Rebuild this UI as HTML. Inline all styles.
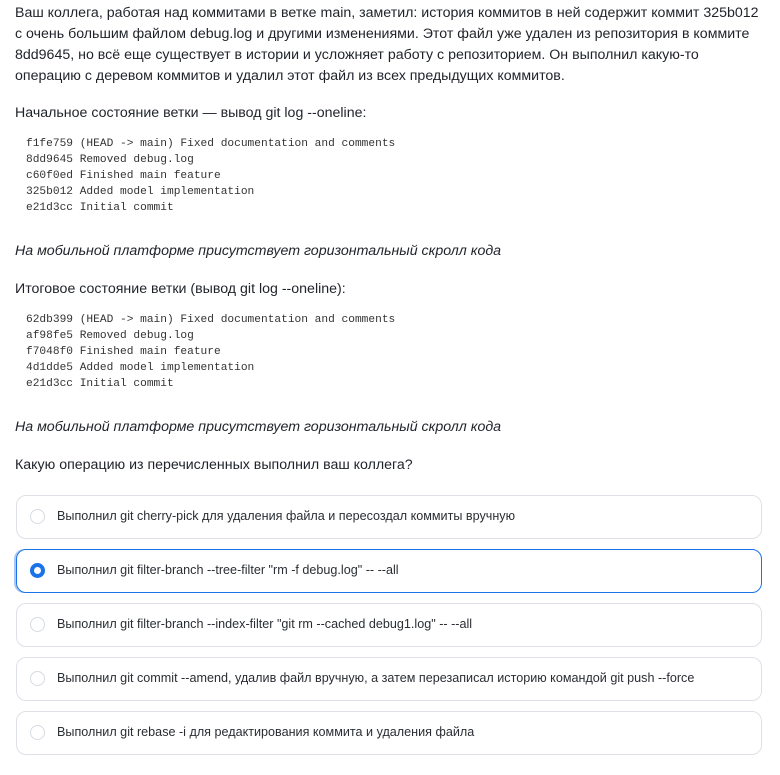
<html><head><style>
body{margin:0;background:#fff;font-family:"Liberation Sans",sans-serif;color:#1f2329;}
.w{position:absolute;left:15px;top:0;width:750px}
p{margin:0;font-size:14.2px;line-height:21px}
pre{margin:0;font-family:"Liberation Mono",monospace;font-size:11.2px;line-height:16px;color:#333;padding-left:11px}
.i{font-style:italic}
.c{position:absolute;left:16px;width:744px;height:42px;border:1px solid #dde1e7;border-radius:10px;box-sizing:content-box}
.c span{position:absolute;left:40px;top:13px;font-size:12.6px;color:#2a2e33}
.r{position:absolute;left:13px;top:13px;width:15px;height:15px;border:1px solid #d6dae0;border-radius:50%;box-sizing:border-box}
.s{border-color:#1a73e8;box-shadow:-2px 0 0 #a9c8f5}
.s .r{border:4px solid #1a73e8;background:#fff}
</style></head><body>
<div class="w">
<p style="position:absolute;top:3px">Ваш коллега, работая над коммитами в ветке main, заметил: история коммитов в ней содержит коммит 325b012 с очень большим файлом debug.log и другими изменениями. Этот файл уже удален из репозитория в коммите 8dd9645, но всё еще существует в истории и усложняет работу с репозиторием. Он выполнил какую-то операцию с деревом коммитов и удалил этот файл из всех предыдущих коммитов.</p>
<p style="position:absolute;top:103px">Начальное состояние ветки — вывод git log --oneline:</p>
<pre style="position:absolute;top:136px">f1fe759 (HEAD -> main) Fixed documentation and comments
8dd9645 Removed debug.log
c60f0ed Finished main feature
325b012 Added model implementation
e21d3cc Initial commit</pre>
<p class="i" style="position:absolute;top:241px">На мобильной платформе присутствует горизонтальный скролл кода</p>
<p style="position:absolute;top:279px">Итоговое состояние ветки (вывод git log --oneline):</p>
<pre style="position:absolute;top:312px">62db399 (HEAD -> main) Fixed documentation and comments
af98fe5 Removed debug.log
f7048f0 Finished main feature
4d1dde5 Added model implementation
e21d3cc Initial commit</pre>
<p class="i" style="position:absolute;top:417px">На мобильной платформе присутствует горизонтальный скролл кода</p>
<p style="position:absolute;top:455px">Какую операцию из перечисленных выполнил ваш коллега?</p>
</div>
<div class="c" style="top:495px"><div class="r"></div><span>Выполнил git cherry-pick для удаления файла и пересоздал коммиты вручную</span></div>
<div class="c s" style="top:549px"><div class="r"></div><span>Выполнил git filter-branch --tree-filter "rm -f debug.log" -- --all</span></div>
<div class="c" style="top:603px"><div class="r"></div><span>Выполнил git filter-branch --index-filter "git rm --cached debug1.log" -- --all</span></div>
<div class="c" style="top:657px"><div class="r"></div><span>Выполнил git commit --amend, удалив файл вручную, а затем перезаписал историю командой git push --force</span></div>
<div class="c" style="top:711px"><div class="r"></div><span>Выполнил git rebase -i для редактирования коммита и удаления файла</span></div>
</body></html>
